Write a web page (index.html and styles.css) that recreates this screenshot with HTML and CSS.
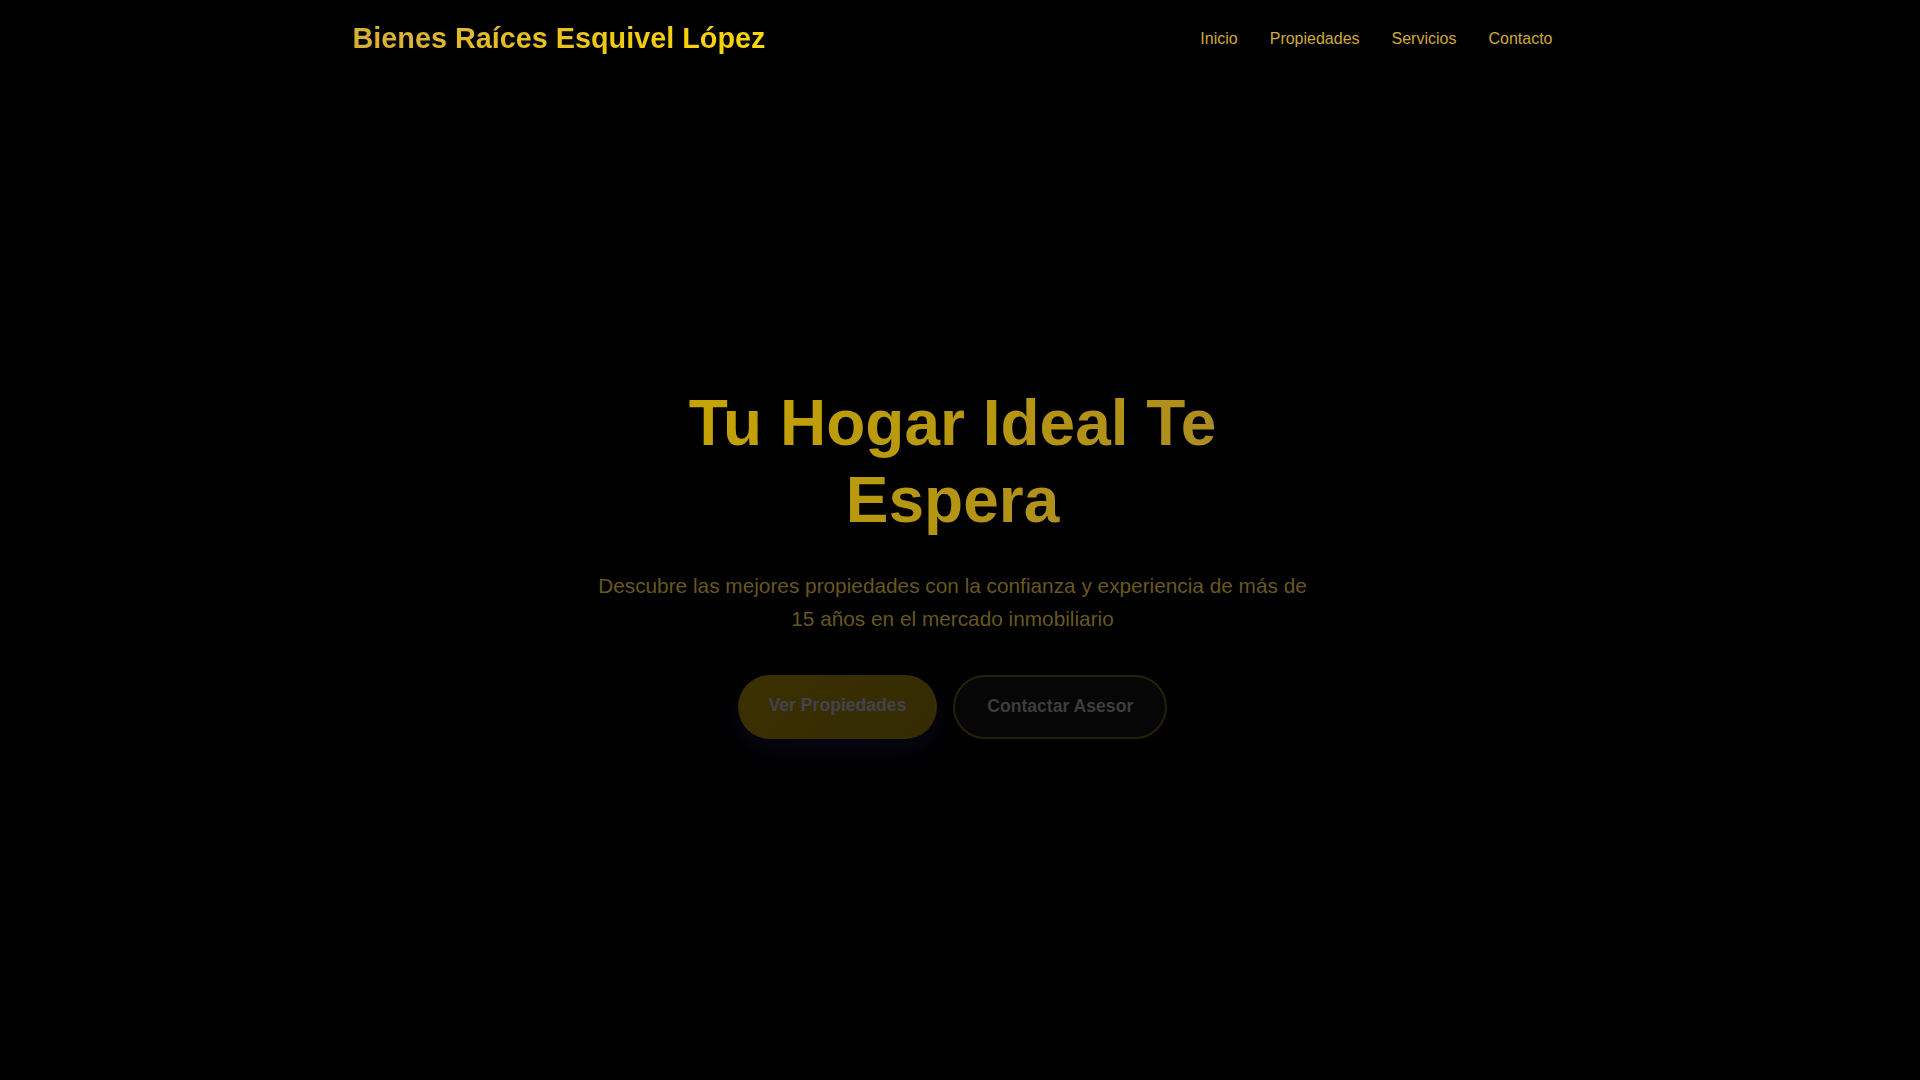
FILE: index.html
```html
<!DOCTYPE html>
<html lang="es">
<head>
  <meta charset="UTF-8" />
  <meta name="viewport" content="width=device-width, initial-scale=1.0"/>
  <title>Bienes Raíces Esquivel López</title>
  <link rel="stylesheet" href="styles.css">
</head>
<body>
  <!-- Header -->
  <header class="site-header">
    <div class="header-inner">
      <div class="logo">Bienes Raíces Esquivel López</div>
      <nav class="main-nav">
        <a href="#inicio">Inicio</a>
        <a href="#propiedades">Propiedades</a>
        <a href="#servicios">Servicios</a>
        <a href="#contacto">Contacto</a>
      </nav>
    </div>
  </header>

  <!-- Hero -->
  <section class="hero" id="inicio">
    <div class="hero-content">
      <h1 class="hero-title">Tu Hogar Ideal Te Espera</h1>
      <p class="hero-text">Descubre las mejores propiedades con la confianza y experiencia de más de 15 años en el mercado inmobiliario</p>
      <div class="hero-buttons">
        <a href="#propiedades" class="btn btn-primary">Ver Propiedades</a>
        <a href="#contacto" class="btn btn-secondary">Contactar Asesor</a>
      </div>
    </div>
  </section>
</body>
</html>
```

FILE: styles.css
```css
* {
  margin: 0;
  padding: 0;
  box-sizing: border-box;
}

body {
  font-family: "Liberation Sans", Arial, sans-serif;
  background: #000;
  color: #fff;
  padding-right: 15px;
}

a {
  text-decoration: none;
}

/* Header */
.site-header {
  background: #000;
  padding: 1.4rem 0;
}

.header-inner {
  max-width: 1200px;
  margin: 0 auto;
  display: flex;
  justify-content: space-between;
  align-items: center;
}

.logo {
  display: inline-block;
  font-size: 1.8rem;
  font-weight: bold;
  background: linear-gradient(90deg, #d4af37, #ffd700);
  -webkit-background-clip: text;
  background-clip: text;
  color: transparent;
}

.main-nav {
  display: flex;
  gap: 2rem;
}

.main-nav a {
  color: #cfaa38;
  font-size: 16px;
}

/* Hero */
.hero {
  min-height: 100vh;
  display: flex;
  flex-direction: column;
  justify-content: center;
  align-items: center;
  padding: 0 2rem 112px;
  text-align: center;
}

.hero-content {
  max-width: 720px;
}

.hero-title {
  font-size: 4rem;
  font-weight: bold;
  line-height: 1.2;
  margin-bottom: 30px;
  background: linear-gradient(135deg, #ccaa00 0%, #b8980f 45%, #a4852a 100%);
  -webkit-background-clip: text;
  background-clip: text;
  color: transparent;
}

.hero-text {
  font-size: 1.3rem;
  line-height: 1.6;
  color: rgb(104, 87, 30);
  margin-bottom: 2.5rem;
}

.hero-buttons {
  display: flex;
  justify-content: center;
  gap: 1rem;
}

.btn {
  display: inline-block;
  font-size: 1.1rem;
  font-weight: bold;
  border-radius: 50px;
  border: 2px solid transparent;
  padding: 1.2rem 2rem;
}

.btn-primary {
  padding: 1.1rem 1.8rem 1.3rem;
  background: linear-gradient(135deg, #3b3000, #352b04);
  color: #42424d;
  box-shadow: 0 10px 30px rgba(30, 30, 90, 0.25);
}

.btn-secondary {
  background: #060606;
  border-color: #262009;
  color: #3d3d3d;
}
```
